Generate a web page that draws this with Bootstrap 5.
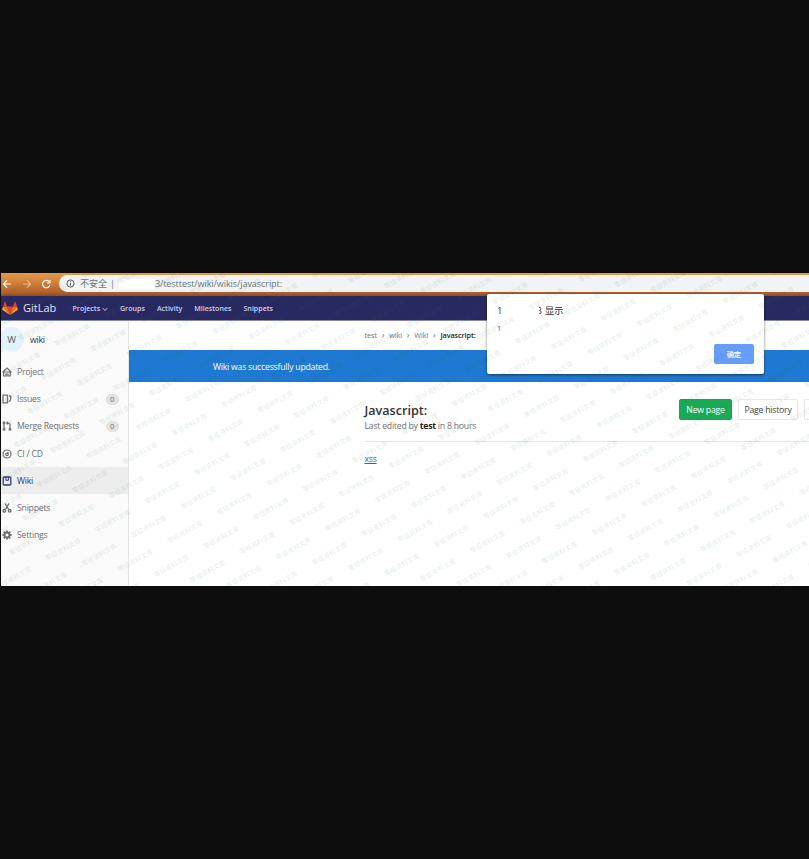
<!DOCTYPE html>
<html lang="zh-CN">
<head>
<meta charset="utf-8">
<title>Javascript: · Wiki · GitLab</title>
<meta name="viewport" content="width=device-width, initial-scale=1">
<link href="https://cdn.jsdelivr.net/npm/bootstrap@5.3.0/dist/css/bootstrap.min.css" rel="stylesheet">
<style>
body{background:#0d0d0d;font-family:"Open Sans","Noto Sans CJK SC",sans-serif;font-size:8.7px;letter-spacing:-.23px;line-height:12px;color:#333;height:859px;overflow:hidden;padding:273px 0 0 1px}
.t{white-space:nowrap;display:inline-block}
.shot{height:313px;background:#fff}
.browser{height:23px;background:linear-gradient(#e29a4c 0,#d5843c 35%,#b2602b 85%,#8d4a2c 100%);padding-top:2px}
.browser .tools{width:58px;padding-left:1px;color:#fff;height:18px}
.omni{height:17px;background:#f1f3f4;border-radius:9px 0 0 9px;color:#70757a;font-size:9.1px;letter-spacing:-.1px;padding-left:7px}
.redact{width:36px;height:10px;background:#fff}
.topnav{height:25px;background:#292961;border-bottom:1px solid #8686aa;color:#d1d1f0;font-size:7.1px;letter-spacing:0;font-weight:600}
.nav-items{gap:12px}
.brand{width:71.500px;color:#e4e4f6;font-size:11px;font-weight:400;padding-left:1px}
.side{width:128px;background:#fafafa;border-right:1px solid #e3e3e3;color:#707070;flex:none}
.ctx{height:37px;color:#333}
.ava{width:25px;height:25px;margin-left:-2px;border-radius:50%;background:#e3f2fd;color:#555;font-size:9.5px}
.item{height:27.2px;padding:1px 0 0 1px}
.item svg{margin-right:5px;flex:none}
.item.on{background:#ededed;color:#35357a}
.cnt{width:13px;height:11px;border-radius:6px;background:#e2e2e2;font-size:7.5px;line-height:11px;margin-right:9.500px}
.crumbs{height:29px;padding:0 0 2px 235.500px;font-size:7.3px;letter-spacing:-.1px;color:#707070}
.sep{width:12.300px;text-align:center;font-size:9px}
.notice{height:32px;background:#1f78d1;color:#fff;padding:1px 0 0 84px}
.body-pane{padding-left:235.5px}
.head{height:59.500px;border-bottom:1px solid #e5e5e5;padding-top:17px}
.ttl{font-size:12.6px;letter-spacing:0;font-weight:600;line-height:17px;margin-top:3px}
.edited{color:#707070;margin-top:1px}
.gbtn{height:21px;border:1px solid #e8e8e8;border-radius:2px;background:#fff;color:#444}
.gbtn.go{background:#1aaa55;border-color:#1aa250;color:#fff;width:53px;font-weight:500}
.gbtn.hist{width:60px}
.gbtn.cut{width:5px;border-right:0;border-radius:2px 0 0 2px}
.lnk{color:#3a62ad;text-decoration:underline}
.dialog-box{left:486px;top:21px;width:276.500px;height:79.500px;background:#fff;border-radius:2px;box-shadow:0 1px 3px rgba(0,0,0,.55);padding:11px 9.500px 9.500px 10px}
.dialog-box .from{font-size:9.5px}
.dialog-box .clip{margin-left:36.500px;width:3px;overflow:hidden;direction:rtl}
.dialog-box .ok{width:40.500px;height:20.500px;border-radius:2px;background:#669df6;color:#fff;font-size:7.3px;font-weight:500}
.wm{left:0;top:0;pointer-events:none}
.wm text{font:bold 6.6px "Noto Sans CJK SC",sans-serif;letter-spacing:0;fill:#2e7044;fill-opacity:.105}
</style>
</head>
<body>
<div class="shot position-relative overflow-hidden">
  <div class="browser d-flex">
    <div class="tools d-flex align-items-center">
      <svg width="52" height="12" viewBox="0 0 52 12" fill="none" stroke="currentColor" stroke-width="1.2"><path d="M9 6H1.6M5 2.4 1.5 6 5 9.6"/><path opacity=".5" d="M21 6h7.4M25 2.4 28.500 6 25 9.600"/><path d="M47 3.600A3.700 3.700 0 1 0 47.800 7M48 2v3h-3"/></svg>
    </div>
    <div class="omni d-flex align-items-center flex-grow-1">
      <svg width="9" height="9" viewBox="0 0 9 9" fill="none" stroke="#555" stroke-width="1"><circle cx="4.500" cy="4.500" r="3.600"/><path d="M4.500 4v2.600M4.500 2.300v1"/></svg>
      <span class="t" style="margin-left:5px">不安全</span><span class="t" style="margin-left:3px">|</span><span class="redact ms-1"></span><span class="t">3/testtest/wiki/wikis/javascript:</span>
    </div>
  </div>
  <nav class="topnav d-flex align-items-center">
    <div class="brand d-flex align-items-center">
      <svg width="16" height="15" viewBox="0 0 16 15"><path fill="#e24329" d="M8 14 5 5.500h6z"/><path fill="#fc6d26" d="M8 14 5 5.500H1zM8 14l3-8.500h4z"/><path fill="#fca326" d="M8 14 1 5.500.200 8.200c-.1.400 0 .700.300.9zM8 14l7-8.500.8 2.700c.1.400 0 .700-.3.900z"/><path fill="#e24329" d="M1 5.500h4L3.300.7c-.1-.3-.5-.3-.6 0zM15 5.500h-4L12.700.7c.1-.3.500-.3.600 0z"/></svg>
      <span class="t" style="margin-left:5px">GitLab</span>
    </div>
    <div class="d-flex nav-items"><span class="t">Projects <svg width="6" height="5" viewBox="0 0 6 5" fill="none" stroke="currentColor"><path d="M.8 1.200 3 3.500l2.200-2.300"/></svg></span><span class="t">Groups</span><span class="t">Activity</span><span class="t">Milestones</span><span class="t">Snippets</span></div>
  </nav>
  <div class="d-flex" style="height:265px">
    <aside class="side">
      <div class="ctx d-flex align-items-center"><span class="ava d-flex align-items-center justify-content-center">W</span><span class="t" style="margin-left:6px">wiki</span></div>
      <div class="item d-flex align-items-center"><svg width="10" height="10" viewBox="0 0 10 10" fill="none" stroke="currentColor" stroke-width="1.200"><path d="M.5 5.200 5 1l4.500 4.200M1 5h8M1.700 5v4h6.600V5M4 9V7h2v2"/></svg><span class="t">Project</span></div>
      <div class="item d-flex align-items-center"><svg width="10" height="10" viewBox="0 0 10 10" fill="none" stroke="currentColor" stroke-width="1.300"><path d="M1 1.200h4.500v7.600H1zM7 1.800l1.900.5-.4 3.500-1.300 2"/></svg><span class="t">Issues</span><span class="cnt ms-auto text-center">0</span></div>
      <div class="item d-flex align-items-center"><svg width="10" height="10" viewBox="0 0 10 10" fill="none" stroke="currentColor" stroke-width="1.200"><circle cx="2" cy="1.800" r=".9"/><circle cx="2" cy="8.300" r=".9"/><circle cx="8" cy="8.300" r=".9"/><path d="M2 2.700v4.700M8 7.400V3.500Q8 2 6 2H5M6 .600 4.700 2 6 3.400"/></svg><span class="t">Merge Requests</span><span class="cnt ms-auto text-center">0</span></div>
      <div class="item d-flex align-items-center"><svg width="10" height="10" viewBox="0 0 10 10" fill="none" stroke="currentColor" stroke-width="1.200"><circle cx="5" cy="5" r="4"/><circle cx="5" cy="5.300" r="1.300"/><path d="M5 5.300 6.300 3"/></svg><span class="t">CI / CD</span></div>
      <div class="item on d-flex align-items-center"><svg width="10" height="10" viewBox="0 0 10 10" fill="none" stroke="currentColor" stroke-width="1.300"><rect x="1.200" y="1" width="7.600" height="8" rx="1"/><path d="M4 1v3.300h2.400V1" stroke-width="1"/></svg><span class="t" style="font-weight:500">Wiki</span></div>
      <div class="item d-flex align-items-center"><svg width="10" height="10" viewBox="0 0 10 10" fill="none" stroke="currentColor" stroke-width="1.400"><path d="M3 .5 6.700 6.500M7 .5 3.300 6.500"/><circle cx="2.300" cy="7.800" r="1.300"/><circle cx="7.700" cy="7.800" r="1.300"/></svg><span class="t">Snippets</span></div>
      <div class="item d-flex align-items-center"><svg width="10" height="10" viewBox="0 0 10 10" fill="none" stroke="currentColor"><circle cx="5" cy="5" r="2.500" stroke-width="2"/><path stroke-width="1.800" d="M5 .4v1.600M5 8v1.600M.4 5H2M8 5h1.600M1.700 1.700l1.200 1.200M7.100 7.100l1.200 1.200M8.300 1.700 7.100 2.900M2.900 7.100 1.700 8.300"/></svg><span class="t">Settings</span></div>
    </aside>
    <main class="flex-grow-1">
      <div class="crumbs d-flex align-items-center"><span class="t">test</span><span class="sep">›</span><span class="t">wiki</span><span class="sep">›</span><span class="t">Wiki</span><span class="sep">›</span><span class="t text-dark" style="font-weight:600">Javascript:</span></div>
      <div class="notice d-flex align-items-center"><span class="t">Wiki was successfully updated.</span></div>
      <div class="body-pane">
        <div class="head d-flex justify-content-between">
          <div><div class="ttl">Javascript:</div><div class="t edited">Last edited by <b class="text-dark">test</b> in 8 hours</div></div>
          <div class="d-flex" style="gap:6px"><span class="gbtn go d-flex align-items-center justify-content-center"><span class="t">New page</span></span><span class="gbtn hist d-flex align-items-center justify-content-center"><span class="t">Page history</span></span><span class="gbtn cut"></span></div>
        </div>
        <div style="padding-top:11px"><a class="lnk t">xss</a></div>
      </div>
    </main>
  </div>
  <div class="dialog-box position-absolute d-flex flex-column">
    <div class="from d-flex"><span>1</span><span class="clip">3</span><span class="t" style="margin-left:3px">显示</span></div>
    <div style="font-size:7.500px;margin-top:4.500px;color:#666">1</div>
    <span class="ok mt-auto ms-auto d-flex align-items-center justify-content-center">确定</span>
  </div>
  <svg class="wm position-absolute" width="808" height="313" id="wm" aria-hidden="true"></svg>
</div>
<script src="https://cdn.jsdelivr.net/npm/bootstrap@5.3.0/dist/js/bootstrap.bundle.min.js"></script>
<script>
// Repeats the diagonal watermark over the whole page area on a skewed grid.
const wm = document.getElementById('wm');
let marks = '';
for (let i = -30; i < 40; i++) for (let j = -16; j < 16; j++) {
  const x = 152.300 + i * 36.120 - j * 13.550, y = 146.300 + i * 5.470 + j * 33.900;
  if (x > -18 && x < 826 && y > -10 && y < 323)
    marks += `<text transform="translate(${x.toFixed(1)} ${y.toFixed(1)}) rotate(-29)" text-anchor="middle" y="2.400">零组资料文库</text>`;
}
wm.innerHTML = marks;
</script>
</body>
</html>
